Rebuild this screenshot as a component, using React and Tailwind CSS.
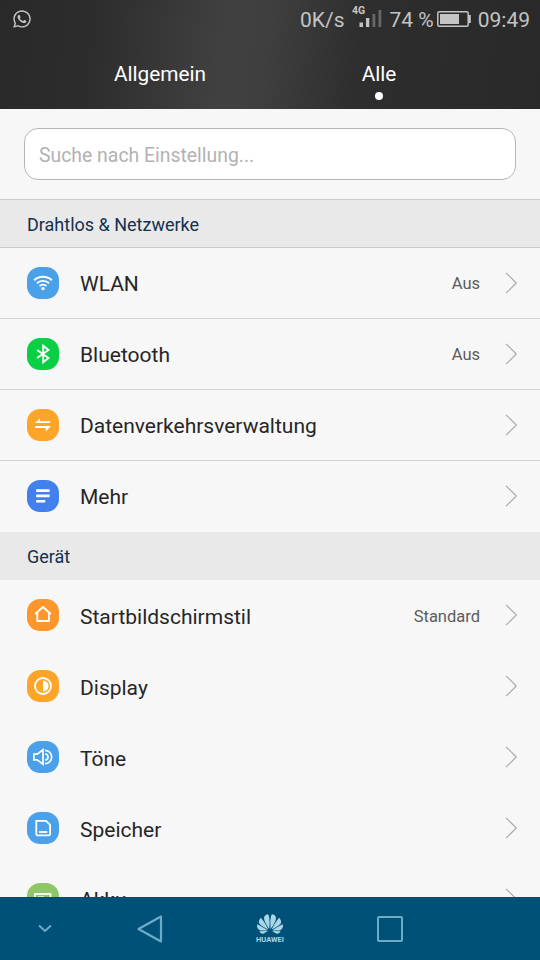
import React from 'react';
import { FaWhatsapp } from 'react-icons/fa';
import { SiHuawei } from 'react-icons/si';

const icons = {
  wifi: (
    <g fill="none" stroke="#fff" strokeWidth="1.9">
      <path d="M7.2 13.2a12.8 12.8 0 0 1 17.6 0" />
      <path d="M9.9 16.3a8.8 8.8 0 0 1 12.2 0" />
      <path d="M12.6 19.1a5 5 0 0 1 6.8 0" />
      <circle cx="16" cy="21.6" r="1.7" fill="#fff" stroke="none" />
    </g>
  ),
  bluetooth: <path d="M10.1 11.9l11.4 8.2-5.3 4.2V7.7l5.3 4.2-11.4 8.2" fill="none" stroke="#fff" strokeWidth="1.9" />,
  data: (
    <path d="M8 14.1l5-4.8v2.9h10.2v1.9zM24 17.1l-5.2 5.5v-3.5H8.2v-2z" fill="#fff" />
  ),
  more: <path d="M9.2 9.2h13.4v2.7H9.2zM9.2 14.6h13.4v2.6H9.2zM9.2 20h9v2.4h-9z" fill="#fff" />,
  home: <path d="M8.2 15L16 8l7.8 7M10.3 14v8h11.6v-8" fill="none" stroke="#fff" strokeWidth="1.9" />,
  display: (
    <>
      <circle cx="16" cy="16" r="8" fill="none" stroke="#fff" strokeWidth="1.8" />
      <path d="M16 10.4a5.6 5.6 0 0 1 0 11.2z" fill="#fff" />
    </>
  ),
  sound: (
    <g fill="none" stroke="#fff" strokeWidth="1.7">
      <path d="M6.9 13.2h3.3l5.8-4.4v14.4l-5.8-4.4H6.9z" />
      <path d="M18 13a3 3 0 0 1 0 6M18 9.3a6.7 6.7 0 0 1 0 13.4" />
    </g>
  ),
  storage: (
    <g fill="none" stroke="#fff" strokeWidth="1.8">
      <path d="M9.3 8.8h9.7l4.1 4v9.3a1.2 1.2 0 0 1-1.2 1.2H10.5a1.2 1.2 0 0 1-1.2-1.2z" />
      <path d="M12 20h8.3" />
    </g>
  ),
  battery: (
    <>
      <rect x="8" y="11" width="15.5" height="11" fill="none" stroke="#fff" strokeWidth="1.8" />
      <path d="M11 13h6v7h-6z" fill="#fff" opacity="0.6" />
    </>
  ),
};

const wireless = [
  { label: 'WLAN', icon: 'wifi', color: 'bg-[#4ba1e9]', value: 'Aus' },
  { label: 'Bluetooth', icon: 'bluetooth', color: 'bg-[#08cf43]', value: 'Aus' },
  { label: 'Datenverkehrsverwaltung', icon: 'data', color: 'bg-[#fda528]' },
  { label: 'Mehr', icon: 'more', color: 'bg-[#4280ee]' },
];

const device = [
  { label: 'Startbildschirmstil', icon: 'home', color: 'bg-[#fd972b]', value: 'Standard', textPad: 'pt-1' },
  { label: 'Display', icon: 'display', color: 'bg-[#fda528]', textPad: 'pt-1' },
  { label: 'Töne', icon: 'sound', color: 'bg-[#4ba1e9]', textPad: 'pt-1' },
  { label: 'Speicher', icon: 'storage', color: 'bg-[#4ba1e9]', textPad: 'pt-1' },
  { label: 'Akku', icon: 'battery', color: 'bg-[#8fc768]' },
];

function Row({ item, divider }) {
  const textPad = item.textPad || 'pt-0.5';
  return (
    <div className={`flex h-[71px] shrink-0 items-center border-b pl-[27px] pr-[22px] ${divider ? 'border-[#d3d3d3]' : 'border-transparent'}`}>
      <div className={`h-8 w-8 shrink-0 rounded-[13px] ${item.color}`}>
        <svg viewBox="0 0 32 32" className="h-8 w-8">{icons[item.icon]}</svg>
      </div>
      <span className={`ml-[21px] flex-1 text-[21px] leading-7 text-[#262626] ${textPad}`}>{item.label}</span>
      {item.value && <span className={`text-[16.5px] leading-6 text-[#5c5c5c] ${textPad}`}>{item.value}</span>}
      <svg viewBox="0 0 13 22" className="ml-[25px] h-[22px] w-[13px] shrink-0" fill="none" stroke="#a6a6a6" strokeWidth="1.1">
        <path d="M1 .8L11.3 11 1 21.2" />
      </svg>
    </div>
  );
}

function StatusBar() {
  return (
    <div className="flex h-[38px] items-center pl-3 pr-2.5 text-[21px] leading-6 text-[#c4c4c4]">
      <FaWhatsapp className="-mt-px h-5 w-5" />
      <span className="ml-auto pt-0.5">0K/s</span>
      <svg viewBox="0 0 30 26" className="ml-[7px] h-[26px] w-[30px]" fill="#c4c4c4">
        <text x="0" y="8" fontSize="10.5" fontWeight="700">4G</text>
        <path d="M7.5 16.5H11V21H7.5zM14 12h3.3v9H14z" />
        <path d="M20.5 8h2.8v13h-2.8zM26.5 4h2.8v17h-2.8z" fill="#686868" />
      </svg>
      <span className="ml-2 pt-0.5">74 %</span>
      <svg viewBox="0 0 34 16" className="ml-[3px] h-4 w-[34px]">
        <rect x="0.8" y="0.8" width="30.4" height="14.4" rx="1.5" fill="none" stroke="#c4c4c4" strokeWidth="1.5" />
        <path d="M3 3h19v10H3zM31.5 4h2.3v8h-2.3z" fill="#c4c4c4" />
      </svg>
      <span className="ml-[7px] pt-0.5">09:49</span>
    </div>
  );
}

function NavBar() {
  return (
    <nav className="grid h-[63px] shrink-0 grid-cols-[89px_121px_120px_119px_91px] items-center justify-items-center border-t border-[#0b4b68] bg-[#005177]">
      <svg viewBox="0 0 14 10" className="h-2.5 w-3.5" fill="none" stroke="#6cacca" strokeWidth="2">
        <path d="M1 1.5l6 5.5 6-5.5" />
      </svg>
      <svg viewBox="0 0 26 28" className="h-7 w-[26px]" fill="none" stroke="#6cacca" strokeWidth="2.2" strokeLinejoin="round">
        <path d="M24 1.5v25L1.5 14z" />
      </svg>
      <div className="flex flex-col items-center text-[#a9d6e8]">
        <SiHuawei className="-mt-1 h-[26px] w-[26px]" />
        <span className="-mt-px text-[7.5px] font-bold leading-[8px]">HUAWEI</span>
      </div>
      <div className="h-[26px] w-[26px] rounded-[2px] border-2 border-[#6cacca]" />
    </nav>
  );
}

export default function App() {
  return (
    <div className="flex h-[960px] w-[540px] flex-col overflow-hidden bg-[#f7f7f7] font-['Roboto','Liberation_Sans',sans-serif]">
      <header className="h-[109px] shrink-0 bg-[linear-gradient(97deg,#292929_0%,#2d2d2d_18%,#414141_42%,#3f3f3f_49%,#2e2e2e_66%,#292929_100%)]">
        <StatusBar />
        <div className="grid grid-cols-[320px_118px] pt-[22px] text-[20.8px] leading-7 text-white">
          <span className="text-center">Allgemein</span>
          <div className="flex flex-col items-center">
            <span>Alle</span>
            <span className="mt-1 h-2 w-2 rounded-full bg-white" />
          </div>
        </div>
      </header>

      <main className="flex min-h-0 flex-1 flex-col overflow-hidden">
        <div className="h-[90px] shrink-0 px-6 pt-[19px]">
          <div className="flex h-[52px] items-center rounded-[14px] border border-[#b5b5b5] bg-white px-3.5 pt-[3px] text-[19.4px] text-[#b2b2b2]">
            Suche nach Einstellung...
          </div>
        </div>
        <h2 className="flex h-[49px] shrink-0 items-center border-y border-[#cbcbcb] bg-[#e9e9e9] pl-[27px] pt-0.5 text-[18px] text-[#13304d]">
          Drahtlos &amp; Netzwerke
        </h2>
        {wireless.map((item, i) => (
          <Row key={item.label} item={item} divider={i < wireless.length - 1} />
        ))}
        <h2 className="flex h-12 shrink-0 items-center bg-[#e9e9e9] pl-[27px] pt-px text-[18px] text-[#13304d]">Gerät</h2>
        {device.map((item) => (
          <Row key={item.label} item={item} />
        ))}
      </main>

      <NavBar />
    </div>
  );
}
